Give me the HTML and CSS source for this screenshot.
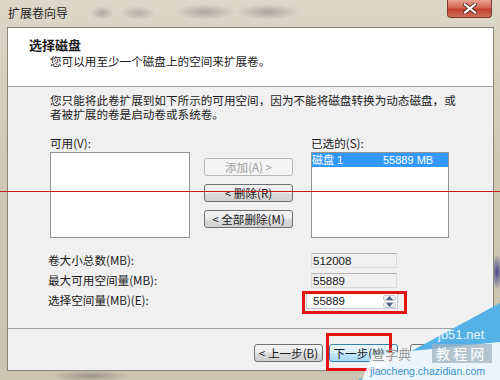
FILE: index.html
```
<!DOCTYPE html>
<html lang="zh-CN">
<head>
  <meta charset="UTF-8">
  <title>扩展卷向导</title>
  <link rel="stylesheet" href="styles.css">
</head>
<body>
  <div class="window">
    <div class="titlebar">
      <span class="title">扩展卷向导</span>
      <button class="close" aria-label="关闭">
        <svg width="14" height="11" viewBox="0 0 14 11">
          <path d="M2 1.5 L12 9.5 M12 1.5 L2 9.5" stroke="#5a2a22" stroke-width="4" stroke-linecap="square"/>
          <path d="M2 1.5 L12 9.5 M12 1.5 L2 9.5" stroke="#ffffff" stroke-width="2.2" stroke-linecap="square"/>
        </svg>
      </button>
    </div>

    <div class="client">
      <div class="header">
        <div class="header-title">选择磁盘</div>
        <div class="header-sub">您可以用至少一个磁盘上的空间来扩展卷。</div>
      </div>

      <div class="content">
        <p class="intro">您只能将此卷扩展到如下所示的可用空间，因为不能将磁盘转换为动态磁盘，或<br>者被扩展的卷是启动卷或系统卷。</p>

        <div class="pick">
          <div class="col col-left">
            <div class="label">可用(V):</div>
            <div class="listbox"></div>
          </div>
          <div class="col col-mid">
            <button class="btn" disabled>添加(A) &gt;</button>
            <button class="btn">&lt; 删除(R)</button>
            <button class="btn">&lt; 全部删除(M)</button>
          </div>
          <div class="col col-right">
            <div class="label">已选的(S):</div>
            <div class="listbox">
              <div class="item selected"><span class="disk">磁盘 1</span><span>55889 MB</span></div>
            </div>
          </div>
        </div>

        <div class="sizes">
          <span class="lbl">卷大小总数(MB):</span>
          <span class="field">512008</span>
          <span class="lbl">最大可用空间量(MB):</span>
          <span class="field">55889</span>
          <span class="lbl">选择空间量(MB)(E):</span>
          <span class="spin">
            <span class="spin-val">55889</span>
            <span class="spin-btns">
              <span class="arrow">
                <svg width="7" height="4" viewBox="0 0 7 4"><path d="M0 4 L3.5 0 L7 4Z" fill="#4d6185"/></svg>
              </span>
              <span class="arrow">
                <svg width="7" height="4" viewBox="0 0 7 4"><path d="M0 0 L3.5 4 L7 0Z" fill="#4d6185"/></svg>
              </span>
            </span>
          </span>
        </div>
      </div>

      <div class="footer">
        <button class="btn wide">&lt; 上一步(B)</button>
        <button class="btn wide focus">下一步(N) &gt;</button>
        <button class="btn wide cancel">取消</button>
      </div>
    </div>

    <!-- annotations drawn over the screenshot -->
    <div class="mark mark-spin"></div>
    <div class="mark mark-next"></div>
    <div class="redline"></div>

    <svg class="watermark" width="150" height="85" viewBox="0 0 150 85">
      <polygon points="8,85 150,8 150,85" fill="#55b2e6"/>
      <polygon points="12,85 22,60 150,47 150,85" fill="#ffffff" opacity="0.88"/>
      <rect x="82" y="49" width="60" height="19" fill="#9fb3c2" opacity="0.75"/>
      <text x="88" y="44" class="wm-site">jb51.net</text>
      <text x="86" y="64" class="wm-cn">教 程 网</text>
      <text x="22" y="64" class="wm-gray">查字典</text>
      <text x="20" y="80" class="wm-url">jiaocheng.chazidian.com</text>
    </svg>
  </div>
</body>
</html>
```

FILE: styles.css
```
* {
  box-sizing: border-box;
}

body {
  margin: 0;
  width: 500px;
  height: 380px;
  overflow: hidden;
  font-family: "Noto Sans CJK SC", "Liberation Sans", sans-serif;
  font-size: 11.6px;
  color: #1a1a1a;
}

.window {
  position: relative;
  width: 500px;
  height: 380px;
  padding: 27px 6px 9px 7px;
  background:
    radial-gradient(ellipse 12px 7px at 102px 13px, rgba(90, 90, 90, 0.35), transparent),
    radial-gradient(ellipse 18px 7px at 138px 13px, rgba(90, 90, 90, 0.3), transparent),
    radial-gradient(ellipse 30px 8px at 205px 12px, rgba(80, 80, 80, 0.35), transparent),
    radial-gradient(ellipse 32px 8px at 268px 12px, rgba(80, 80, 80, 0.35), transparent),
    radial-gradient(ellipse 40px 6px at 90px 376px, rgba(80, 80, 80, 0.4), transparent),
    radial-gradient(ellipse 6px 18px at 497px 272px, rgba(30, 40, 120, 0.8), transparent),
    linear-gradient(#ddd7c8, #cfc8b5 40%, #cbc4b0);
}

.titlebar {
  position: absolute;
  top: 0;
  left: 0;
  right: 0;
  height: 27px;
}

.title {
  position: absolute;
  left: 8px;
  top: 6px;
  font-size: 12px;
  line-height: 14px;
  color: #222;
}

.close {
  position: absolute;
  top: 0;
  right: 8px;
  width: 45px;
  height: 18px;
  padding: 0;
  border: 1px solid #7a3a30;
  border-top: none;
  border-radius: 0 0 4px 4px;
  background: linear-gradient(#e9a592, #d46450 45%, #c1412d 55%, #d0705a);
  display: flex;
  align-items: center;
  justify-content: center;
}

.client {
  width: 487px;
  height: 344px;
  border: 1px solid #8a8578;
  background: #f0f0f0;
  display: flex;
  flex-direction: column;
}

.header {
  height: 59px;
  flex: none;
  background: #ffffff;
  border-bottom: 1px solid #a0a0a0;
  padding: 9px 0 0 21px;
}

.header-title {
  font-size: 13px;
  font-weight: bold;
  line-height: 16px;
}

.header-sub {
  line-height: 16px;
  padding-left: 21px;
}

.content {
  height: 242px;
  flex: none;
  padding: 6px 0 0 42px;
  border-bottom: 1px solid #a0a0a0;
}

.intro {
  margin: 0;
  line-height: 14px;
  white-space: nowrap;
}

.pick {
  display: flex;
  margin-top: 15px;
}

.label {
  line-height: 14px;
  height: 16px;
}

.col-left {
  width: 140px;
}

.col-mid {
  width: 89px;
  margin-left: 14px;
  padding-top: 22px;
  display: flex;
  flex-direction: column;
  gap: 8px;
}

.col-right {
  width: 138px;
  margin-left: 18px;
}

.listbox {
  height: 86px;
  background: #ffffff;
  border: 1px solid #8f949a;
}

.item {
  height: 14px;
  display: flex;
  font-family: "Liberation Sans", "Noto Sans CJK SC", sans-serif;
  font-size: 11px;
  line-height: 14px;
}

.item.selected {
  background: #3399ff;
  color: #ffffff;
}

.disk {
  width: 71px;
}

.btn {
  height: 18px;
  padding: 0;
  font-family: inherit;
  font-size: 11.6px;
  line-height: 14px;
  color: #1a1a1a;
  border: 1px solid #707070;
  border-radius: 3px;
  background: linear-gradient(#f3f3f3, #ebebeb 48%, #dddddd 52%, #cfcfcf);
}

.btn:disabled {
  color: #a0a0a0;
  border-color: #b5b9bc;
  background: #f4f4f4;
}

.sizes {
  display: grid;
  grid-template-columns: 263px 100px;
  grid-auto-rows: 20px;
  align-items: center;
  margin: 12px 0 0 -2px;
}

.lbl {
  line-height: 14px;
}

.field {
  width: 86px;
  height: 15px;
  padding-left: 1px;
  font-family: "Liberation Sans", sans-serif;
  font-size: 11.5px;
  line-height: 14px;
  background: #f0f0f0;
  border: 1px solid #dadada;
  border-top-color: #b4b4b4;
}

.spin {
  width: 92px;
  height: 16px;
  margin-left: -5px;
  margin-top: 2px;
  display: flex;
  background: #ffffff;
  border: 1px solid #c9ced6;
}

.spin-val {
  flex: 1;
  padding-left: 6px;
  font-family: "Liberation Sans", sans-serif;
  font-size: 11.5px;
  line-height: 14px;
}

.spin-btns {
  width: 14px;
  display: flex;
  flex-direction: column;
  gap: 1px;
  padding: 1px 1px 1px 0;
}

.arrow {
  flex: 1;
  display: flex;
  align-items: center;
  justify-content: center;
  border: 1px solid #c5cad2;
  border-radius: 2px;
  background: linear-gradient(#f8f8f8, #e4e6ea);
}

.footer {
  flex: 1;
  display: flex;
  justify-content: flex-end;
  align-items: flex-start;
  gap: 6px;
  padding: 15px 14px 0 0;
}

.btn.wide {
  width: 69px;
}

.btn.cancel {
  margin-left: 6px;
}

.btn.focus {
  border-color: #3c7fb1;
  background: linear-gradient(#eaf6fd, #d9f0fc 48%, #bee6fd 52%, #a7d9f5);
}

.mark {
  position: absolute;
  border: 3px solid #e41414;
}

.mark-spin {
  left: 302px;
  top: 291px;
  width: 105px;
  height: 23px;
}

.mark-next {
  left: 326px;
  top: 333px;
  width: 66px;
  height: 38px;
}

.redline {
  position: absolute;
  left: 0;
  right: 0;
  top: 191px;
  height: 1px;
  background: #c01c1c;
}

.watermark {
  position: absolute;
  left: 350px;
  top: 295px;
}

.wm-site {
  font-family: "Liberation Sans", sans-serif;
  font-size: 13px;
  fill: #e8f6ff;
}

.wm-cn {
  font-family: "Noto Sans CJK SC", sans-serif;
  font-size: 14px;
  fill: #ffffff;
}

.wm-gray {
  font-family: "Noto Sans CJK SC", sans-serif;
  font-size: 13px;
  fill: #9a9a9a;
}

.wm-url {
  font-family: "Liberation Sans", sans-serif;
  font-size: 10.5px;
  fill: #3b8fd2;
}
```
